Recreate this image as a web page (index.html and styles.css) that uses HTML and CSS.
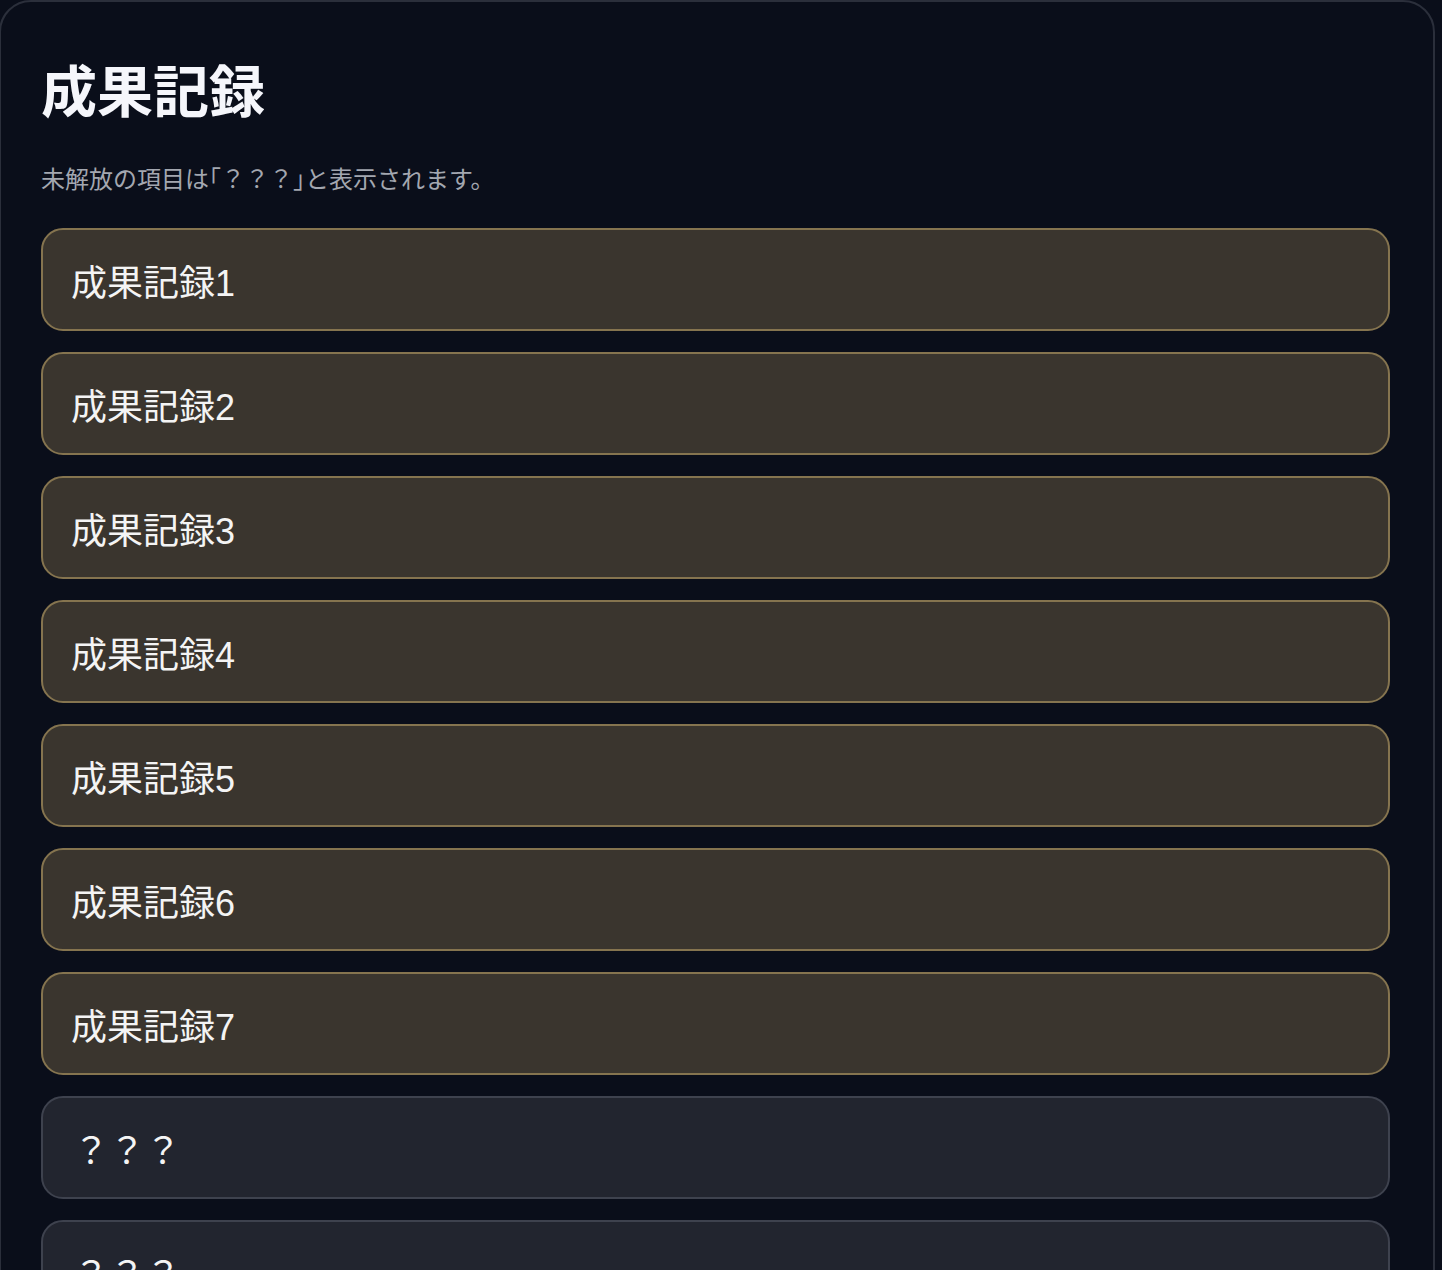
FILE: index.html
```html
<!DOCTYPE html>
<html lang="ja">
<head>
<meta charset="utf-8">
<title>成果記録</title>
<link rel="stylesheet" href="styles.css">
</head>
<body>
<main class="panel">
  <h1 class="title">成果記録</h1>
  <p class="note">未解放の項目は<span class="bracket">「</span>？？？<span class="bracket">」</span>と表示されます。</p>
  <ul class="records">
    <li class="record unlocked">成果記録1</li>
    <li class="record unlocked">成果記録2</li>
    <li class="record unlocked">成果記録3</li>
    <li class="record unlocked">成果記録4</li>
    <li class="record unlocked">成果記録5</li>
    <li class="record unlocked">成果記録6</li>
    <li class="record unlocked">成果記録7</li>
    <li class="record locked">？？？</li>
    <li class="record locked">？？？</li>
  </ul>
</main>
</body>
</html>
```

FILE: styles.css
```css
html, body {
  margin: 0;
  padding: 0;
  background: #0a0e1a;
}
body {
  font-family: "Liberation Sans", "Noto Sans CJK JP", sans-serif;
  color: #f3f4f6;
  height: 1270px;
  overflow: hidden;
}
.panel {
  box-sizing: border-box;
  width: 1436px;
  margin-left: -1px;
  min-height: 1400px;
  background: #0a0e1a;
  border: 2px solid #2b2f3b;
  border-radius: 32px;
  padding: 52px 43px 40px 40px;
}
.title {
  margin: 0;
  font-size: 56px;
  line-height: 78px;
  font-weight: 700;
  color: #f5f6fb;
}
.note {
  margin: 31px 0 0;
  font-size: 24px;
  line-height: 34px;
  color: #a3a7b0;
}
.bracket {
  font-feature-settings: "halt";
}
.records {
  list-style: none;
  margin: 31px 0 0;
  padding: 0;
  display: flex;
  flex-direction: column;
  gap: 21px;
}
.record {
  box-sizing: border-box;
  height: 103px;
  display: flex;
  align-items: center;
  padding: 0 28px;
  border-radius: 22px;
  font-size: 36px;
  color: #f4f4f4;
}
.unlocked {
  background: #3a352e;
  border: 2px solid #85744f;
}
.locked {
  background: #22252f;
  border: 2px solid #3e424e;
  padding-left: 30px;
}
```
